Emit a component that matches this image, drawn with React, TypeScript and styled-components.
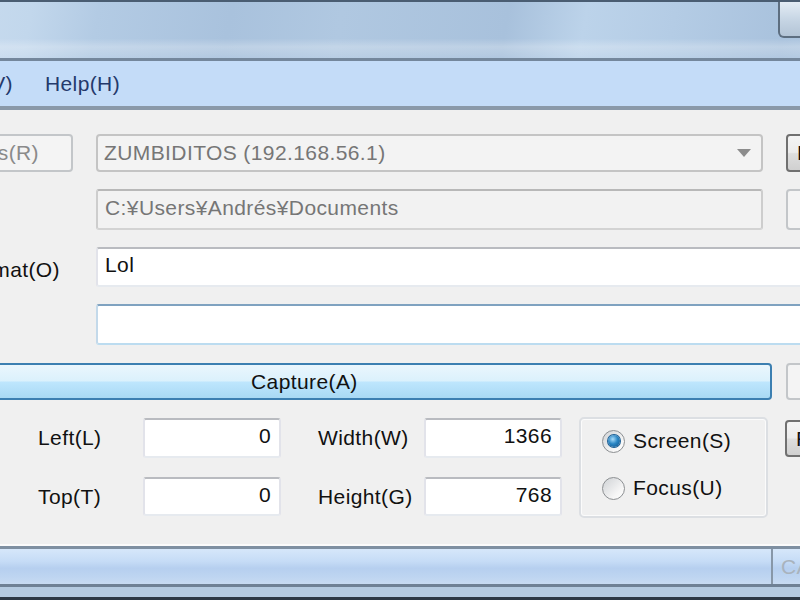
import styled, { createGlobalStyle } from "styled-components";

const GlobalStyle = createGlobalStyle`
  html, body {
    margin: 0;
    padding: 0;
    width: 800px;
    height: 600px;
    overflow: hidden;
    background: #f0f0f0;
  }
  body {
    font-family: "Liberation Sans", Arial, sans-serif;
  }
`;

// the dialog is wider than the shot, so it hangs off the left edge
const Window = styled.div`
  width: 1100px;
  height: 600px;
  margin-left: -100px;
  display: flex;
  flex-direction: column;
  background: #f0f0f0;
  font-size: 21px;
  letter-spacing: 0.4px;
  color: #111;
`;

const TitleBar = styled.div`
  height: 56px;
  border-top: 2px solid #4a5d72;
  border-bottom: 3px solid #74879c;
  display: flex;
  justify-content: flex-end;
  align-items: flex-start;
  padding-right: 170px;
  background: linear-gradient(180deg, rgba(255, 255, 255, 0) 0%, rgba(255, 255, 255, 0) 65%, rgba(255, 255, 255, 0.25) 80%, rgba(255, 255, 255, 0.1) 100%),
    linear-gradient(100deg, #cddff1 0%, #c2d7ec 12%, #b3cbe4 18%, #a9c2dd 30%, #b0c8e1 40%, #a8c1dc 55%, #bcd3ea 62%, #b4cce5 70%, #a9c2dd 80%, #b3cbe3 90%, #b8cfe7 100%);
`;

const CaptionButton = styled.div`
  width: 48px;
  height: 34px;
  border: 2px solid #5d6e80;
  border-top: none;
  border-radius: 0 0 6px 6px;
  background: linear-gradient(#e3ecf5, #c5d4e3 55%, #b3c4d6);
`;

const MenuBar = styled.div`
  height: 45px;
  border-bottom: 4px solid #8a99a9;
  background: #c4dcf8;
  display: flex;
  align-items: center;
  gap: 32px;
  padding-left: 37px;
`;

const MenuItem = styled.span`
  color: #24396b;
`;

const Content = styled.div`
  flex: 1;
  padding-top: 24px;
  display: flex;
  flex-direction: column;
`;

const TopGrid = styled.div`
  display: grid;
  grid-template-columns: 173px 667px 120px;
  grid-template-rows: 38px 41px 40px 41px;
  column-gap: 23px;
  row-gap: 17px;
  align-items: stretch;
`;

const Button = styled.div<{ $state?: "normal" | "disabled" | "hot"; $pad?: number }>`
  box-sizing: border-box;
  height: 100%;
  flex: none;
  display: flex;
  align-items: center;
  justify-content: ${({ $pad }) => ($pad !== undefined ? "flex-start" : "center")};
  padding-left: ${({ $pad }) => ($pad !== undefined ? `${$pad}px` : "0")};
  white-space: nowrap;
  overflow: hidden;
  border-radius: 4px;
  border: 2px solid
    ${({ $state }) => ($state === "hot" ? "#3c7fb1" : $state === "disabled" ? "#c3c6c9" : "#707070")};
  color: ${({ $state }) => ($state === "disabled" ? "#8a8a8a" : "#111")};
  background: ${({ $state }) =>
    $state === "hot"
      ? "linear-gradient(#eaf6fd 0%, #dbf1fc 48%, #bee6fd 52%, #a8d9f4 100%)"
      : $state === "disabled"
      ? "#f4f4f4"
      : "linear-gradient(#f4f4f4 0%, #ececec 48%, #dedede 52%, #d0d0d0 100%)"};
`;

const SideLabelButton = styled(Button)`
  margin-left: 20px;
  justify-content: flex-end;
  padding-right: 32px;
`;

const Combo = styled.div`
  box-sizing: border-box;
  border: 2px solid #c4c4c4;
  border-radius: 4px;
  background: #f3f3f3;
  color: #767676;
  display: flex;
  align-items: center;
  justify-content: space-between;
  padding: 0 10px 0 6px;
`;

const TextBox = styled.div<{ $disabled?: boolean; $focus?: boolean; $right?: boolean; $span?: boolean }>`
  box-sizing: border-box;
  grid-column: ${({ $span }) => ($span ? "2 / span 2" : "auto")};
  height: 100%;
  display: flex;
  align-items: center;
  justify-content: ${({ $right }) => ($right ? "flex-end" : "flex-start")};
  padding: 0 8px 4px 7px;
  border: 2px solid;
  border-radius: 3px;
  border-color: ${({ $disabled, $focus }) =>
    $disabled
      ? "#b8b8b8 #cdcdcd #d3d3d3 #cdcdcd"
      : $focus
      ? "#7fa2c0 #c3d9ea #bcdcf0 #c3d9ea"
      : "#b9bbc0 #e2e3ea #e6eaef #e2e3ea"};
  background: ${({ $disabled }) => ($disabled ? "#f2f2f2" : "#fff")};
  color: ${({ $disabled }) => ($disabled ? "#767676" : "#111")};
`;

const FieldLabel = styled.div<{ $pad?: number }>`
  display: flex;
  align-items: center;
  padding-left: ${({ $pad }) => $pad ?? 0}px;
  white-space: nowrap;
`;

const RightLabel = styled.div`
  display: flex;
  align-items: center;
  justify-content: flex-end;
  padding-right: 13px;
  padding-top: 6px;
`;

const CaptureRow = styled.div`
  margin-top: 18px;
  height: 37px;
  display: flex;
  gap: 14px;
`;

const CaptureButton = styled(Button)`
  margin-left: 20px;
  width: 852px;
`;

const SideButton = styled(Button)`
  width: 120px;
`;

const LowerRow = styled.div`
  margin-top: 17px;
  display: flex;
  align-items: flex-start;
`;

const FieldsGrid = styled.div`
  flex: none;
  margin-top: 1px;
  display: grid;
  grid-template-columns: 243px 138px 143px 138px;
  grid-template-rows: 40px 39px;
  row-gap: 19px;
`;

const GroupBox = styled.div`
  box-sizing: border-box;
  flex: none;
  margin-left: 17px;
  width: 189px;
  height: 101px;
  border: 2px solid #dcdfe3;
  border-radius: 5px;
  box-shadow: inset 0 0 0 1px #fbfbfb;
  padding: 11px 0 0 21px;
  display: flex;
  flex-direction: column;
  gap: 25px;
`;

const RadioRow = styled.div`
  display: flex;
  align-items: center;
  gap: 8px;
  height: 22px;
`;

const RadioCircle = styled.span<{ $checked?: boolean }>`
  box-sizing: border-box;
  width: 23px;
  height: 23px;
  border-radius: 50%;
  border: 1px solid #8c8f92;
  background: linear-gradient(135deg, #cfd2d5, #f6f6f6 70%, #ffffff);
  display: flex;
  align-items: center;
  justify-content: center;
  &::after {
    content: "";
    width: 12px;
    height: 12px;
    border-radius: 50%;
    display: ${({ $checked }) => ($checked ? "block" : "none")};
    background: radial-gradient(circle at 40% 35%, #a8dcfa 0%, #2a86c4 45%, #0f4f86 100%);
    box-shadow: 0 0 0 1px #1b5d93;
  }
`;

const LowerSideButton = styled(SideButton)`
  margin-left: 17px;
  margin-top: 3px;
  height: 37px;
`;

const StatusBar = styled.div`
  margin-top: auto;
  height: 35px;
  border-top: 3px solid #7f90a2;
  border-bottom: 3px solid #6f8195;
  box-shadow: 0 -2px 0 #fbfbfb;
  background: linear-gradient(#d6e7fa 0%, #c6dcf6 35%, #b6cfef 55%, #bed5f1 80%, #c8dbf2 100%);
  display: flex;
  align-items: center;
`;

const StatusPane = styled.div`
  width: 871px;
  height: 100%;
  border-right: 2px solid #8797a8;
`;

const StatusText = styled.span`
  padding-left: 8px;
  color: #a9b3bd;
`;

const FrameBottom = styled.div`
  height: 10px;
  background: #b5cbe1;
  border-bottom: 3px solid #2d3945;
`;

const Arrow = () => (
  <svg width="14" height="8" viewBox="0 0 14 8">
    <path d="M0 0 H14 L7 8 Z" fill="#8c8c8c" />
  </svg>
);

export default function App() {
  return (
    <>
      <GlobalStyle />
      <Window>
        <TitleBar>
          <CaptionButton />
        </TitleBar>
        <MenuBar>
          <MenuItem>View(V)</MenuItem>
          <MenuItem>Help(H)</MenuItem>
        </MenuBar>
        <Content>
          <TopGrid>
            <SideLabelButton $state="disabled">Hosts(R)</SideLabelButton>
            <Combo>
              <span>ZUMBIDITOS (192.168.56.1)</span>
              <Arrow />
            </Combo>
            <Button $state="normal" $pad={9}>
              Browse(B)
            </Button>

            <div />
            <TextBox $disabled>C:¥Users¥Andrés¥Documents</TextBox>
            <Button $state="disabled">Open(P)</Button>

            <RightLabel>Format(O)</RightLabel>
            <TextBox $span>Lol</TextBox>

            <div />
            <TextBox $span $focus />
          </TopGrid>

          <CaptureRow>
            <CaptureButton $state="hot" $pad={329}>
              Capture(A)
            </CaptureButton>
            <SideButton $state="disabled">Stop(Z)</SideButton>
          </CaptureRow>

          <LowerRow>
            <FieldsGrid>
              <FieldLabel $pad={138}>Left(L)</FieldLabel>
              <TextBox $right>0</TextBox>
              <FieldLabel $pad={37}>Width(W)</FieldLabel>
              <TextBox $right>1366</TextBox>
              <FieldLabel $pad={138}>Top(T)</FieldLabel>
              <TextBox $right>0</TextBox>
              <FieldLabel $pad={37}>Height(G)</FieldLabel>
              <TextBox $right>768</TextBox>
            </FieldsGrid>
            <GroupBox>
              <RadioRow>
                <RadioCircle $checked />
                <span>Screen(S)</span>
              </RadioRow>
              <RadioRow>
                <RadioCircle />
                <span>Focus(U)</span>
              </RadioRow>
            </GroupBox>
            <LowerSideButton $state="normal" $pad={9}>
              Region(E)
            </LowerSideButton>
          </LowerRow>
        </Content>
        <StatusBar>
          <StatusPane />
          <StatusText>CAP</StatusText>
        </StatusBar>
        <FrameBottom />
      </Window>
    </>
  );
}
